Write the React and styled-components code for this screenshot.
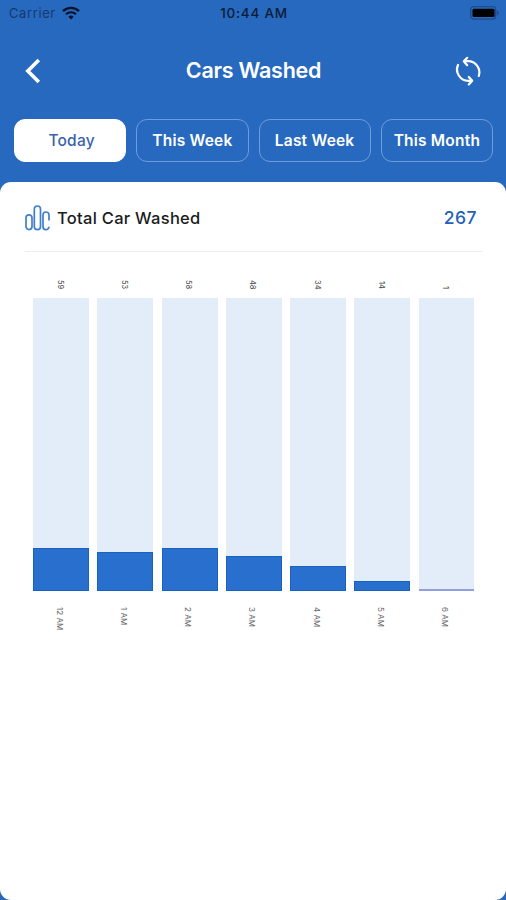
import React, { useState } from "react";
import styled, { createGlobalStyle, ThemeProvider } from "styled-components";

const theme = {
  colors: {
    primary: "#2769bf",
    bar: "#296fcd",
    track: "#e3edf9",
    white: "#ffffff",
    text: "#1b1b1d",
    total: "#2460b8",
    line: "#eaedf0"
  }
};

const GlobalStyle = createGlobalStyle`
  * {
    box-sizing: border-box;
  }
  body {
    margin: 0;
    font-family: Inter, "Liberation Sans", sans-serif;
  }
`;

const Screen = styled.div`
  width: 100%;
  height: 100vh;
  display: flex;
  flex-direction: column;
  overflow: hidden;
  background: ${({ theme }) => theme.colors.primary};
`;

const StatusBar = styled.div`
  height: 26px;
  flex: none;
  display: grid;
  grid-template-columns: 1fr auto 1fr;
  align-items: center;
  padding: 0 7px 0 9px;
  color: #0b1c36;
`;

const Carrier = styled.div`
  display: flex;
  align-items: center;
  gap: 6px;
  font-size: 13px;
  letter-spacing: 0.6px;
  color: #153a70;
`;

const Clock = styled.span`
  font-size: 13.5px;
  font-weight: 500;
  letter-spacing: 0.75px;
`;

const BatteryIcon = styled.svg`
  justify-self: end;
`;

const Header = styled.header`
  height: 92px;
  flex: none;
  display: flex;
  justify-content: space-between;
  align-items: center;
  padding: 0 23px 3px 24px;
`;

const Title = styled.h1`
  margin: 0;
  padding-bottom: 2px;
  font-size: 21.5px;
  font-weight: 600;
  letter-spacing: -0.25px;
  color: ${({ theme }) => theme.colors.white};
`;

const IconBtn = styled.button`
  width: 30px;
  height: 30px;
  display: flex;
  align-items: center;
  justify-content: ${({ $align }) => $align || "center"};
  padding: 0;
  background: none;
  border: 0;
`;

const Tabs = styled.nav`
  height: 64px;
  flex: none;
  display: grid;
  grid-template-columns: repeat(4, 1fr);
  gap: 10px;
  padding: 0 13px 20px 14px;
`;

const Tab = styled.button`
  height: 43px;
  margin-top: 0.5px;
  padding: ${({ $active }) => ($active ? "0 0 0 3px" : "0")};
  border: 1.3px solid
    ${({ theme, $active }) => ($active ? theme.colors.white : "#6f9bda")};
  border-radius: 11px;
  background: ${({ theme, $active }) =>
    $active ? theme.colors.white : "transparent"};
  color: ${({ theme, $active }) => ($active ? "#3762ad" : theme.colors.white)};
  font-family: inherit;
  font-size: 15.5px;
  font-weight: ${({ $active }) => ($active ? 500 : 600)};
  letter-spacing: 0.2px;
  white-space: nowrap;
`;

const Card = styled.main`
  flex: 1;
  border-radius: 11px;
  background: ${({ theme }) => theme.colors.white};
`;

const Summary = styled.div`
  height: 70px;
  margin: 0 24px 0 25px;
  padding: 2px 5px 0 0;
  display: flex;
  align-items: center;
  border-bottom: 1.5px solid ${({ theme }) => theme.colors.line};
`;

const SummaryLabel = styled.span`
  flex: 1;
  margin-left: 7px;
  font-size: 16.5px;
  font-weight: 500;
  letter-spacing: 0.28px;
  color: ${({ theme }) => theme.colors.text};
`;

const Total = styled.span`
  font-size: 17.5px;
  font-weight: 500;
  letter-spacing: 0.5px;
  color: ${({ theme }) => theme.colors.total};
`;

const Chart = styled.div`
  display: grid;
  grid-template-columns: repeat(7, 1fr);
  column-gap: 8.4px;
  padding: 27px 31.7px 0 33.3px;
`;

const Column = styled.div`
  display: flex;
  flex-direction: column;
  align-items: center;
`;

const Value = styled.span`
  height: 12px;
  margin: 0 3px 7px 0;
  padding-bottom: 2px;
  display: flex;
  justify-content: flex-end;
  writing-mode: vertical-rl;
  line-height: 10px;
  font-size: 7.5px;
  color: #444;
`;

const Hour = styled(Value)`
  height: 30px;
  justify-content: flex-start;
  margin: 16px 3px 0 0;
  font-size: 8px;
  color: #666;
`;

const Track = styled.div`
  width: 100%;
  height: 293px;
  display: flex;
  align-items: flex-end;
  background: ${({ theme }) => theme.colors.track};
`;

const Bar = styled.div`
  width: 100%;
  background: ${({ theme, $faint }) => ($faint ? "#8f9fdf" : theme.colors.bar)};
  border: ${({ $faint }) => ($faint ? "0" : "1px solid #1862c2")};
`;

const hours = [
  { label: "12 AM", count: 59 },
  { label: "1 AM", count: 53 },
  { label: "2 AM", count: 58 },
  { label: "3 AM", count: 48 },
  { label: "4 AM", count: 34 },
  { label: "5 AM", count: 14 },
  { label: "6 AM", count: 1 }
];

const tabs = ["Today", "This Week", "Last Week", "This Month"];

const barHeight = count => Math.max(2, count * 0.737);

const WifiIcon = () => (
  <svg width="18" height="14" viewBox="0 0 18 14" fill="none">
    <path d="M1 5.1a11.4 11.4 0 0 1 16 0" stroke="#071326" strokeWidth="2.3" />
    <path d="M4 8.2a7.2 7.2 0 0 1 10 0" stroke="#071326" strokeWidth="2.1" />
    <path d="M6.4 10.8a3.8 3.8 0 0 1 5.2 0L9 13.4z" fill="#071326" />
  </svg>
);

const BackIcon = () => (
  <svg width="18" height="26" viewBox="0 0 18 26" fill="none">
    <path d="M14.8 2 3.8 13l11 11" stroke="#fff" strokeWidth="3.6" />
  </svg>
);

const RefreshIcon = () => (
  <svg
    width="28"
    height="30"
    viewBox="0 0 28 30"
    fill="none"
    stroke="#fff"
    strokeWidth="2.2"
    strokeLinecap="round"
    strokeLinejoin="round"
  >
    <path d="M10 5.2h3.5A11.3 11.3 0 0 1 24.8 20" />
    <path d="M13.2 1.8 9.8 5.2l3.4 4" />
    <path d="M17.8 24.8h-3.3A11.3 11.3 0 0 1 4 9" />
    <path d="m14.8 21 3.4 3.8-3.4 3.6" />
  </svg>
);

const BarsIcon = () => (
  <svg
    width="25"
    height="26"
    viewBox="0 0 25 26"
    fill="none"
    stroke="#407fce"
    strokeWidth="1.7"
  >
    <rect x="1" y="9.8" width="6" height="14.8" rx="3" />
    <rect x="9.3" y="1" width="6.2" height="23.6" rx="3.1" />
    <path d="M24 15.5V10a3 3 0 0 0-6 0v11.5a3 3 0 0 0 6 .3" />
  </svg>
);

function App() {
  const [active, setActive] = useState("Today");
  const total = hours.reduce((sum, { count }) => sum + count, 0);

  return (
    <ThemeProvider theme={theme}>
      <GlobalStyle />
      <Screen>
        <StatusBar>
          <Carrier>
            Carrier
            <WifiIcon />
          </Carrier>
          <Clock>10:44 AM</Clock>
          <BatteryIcon width="30" height="14" viewBox="0 0 30 14">
            <rect x="1.7" y=".7" width="25" height="12.4" rx="3" fill="none" stroke="#1d4b8c" strokeWidth="1.3" />
            <rect x="3.5" y="2.8" width="22" height="8.2" rx="1.5" fill="#000" />
            <path d="M28 4.5c2.2.8 2.2 4.2 0 5z" fill="#1d4b8c" />
          </BatteryIcon>
        </StatusBar>
        <Header>
          <IconBtn $align="flex-start" aria-label="Back">
            <BackIcon />
          </IconBtn>
          <Title>Cars Washed</Title>
          <IconBtn aria-label="Refresh">
            <RefreshIcon />
          </IconBtn>
        </Header>
        <Tabs>
          {tabs.map(tab => (
            <Tab key={tab} $active={tab === active} onClick={() => setActive(tab)}>
              {tab}
            </Tab>
          ))}
        </Tabs>
        <Card>
          <Summary>
            <BarsIcon />
            <SummaryLabel>Total Car Washed</SummaryLabel>
            <Total>{total}</Total>
          </Summary>
          <Chart>
            {hours.map(({ label, count }) => (
              <Column key={label}>
                <Value>{count}</Value>
                <Track>
                  <Bar $faint={count < 2} style={{ height: barHeight(count) }} />
                </Track>
                <Hour>{label}</Hour>
              </Column>
            ))}
          </Chart>
        </Card>
      </Screen>
    </ThemeProvider>
  );
}

export default App;
